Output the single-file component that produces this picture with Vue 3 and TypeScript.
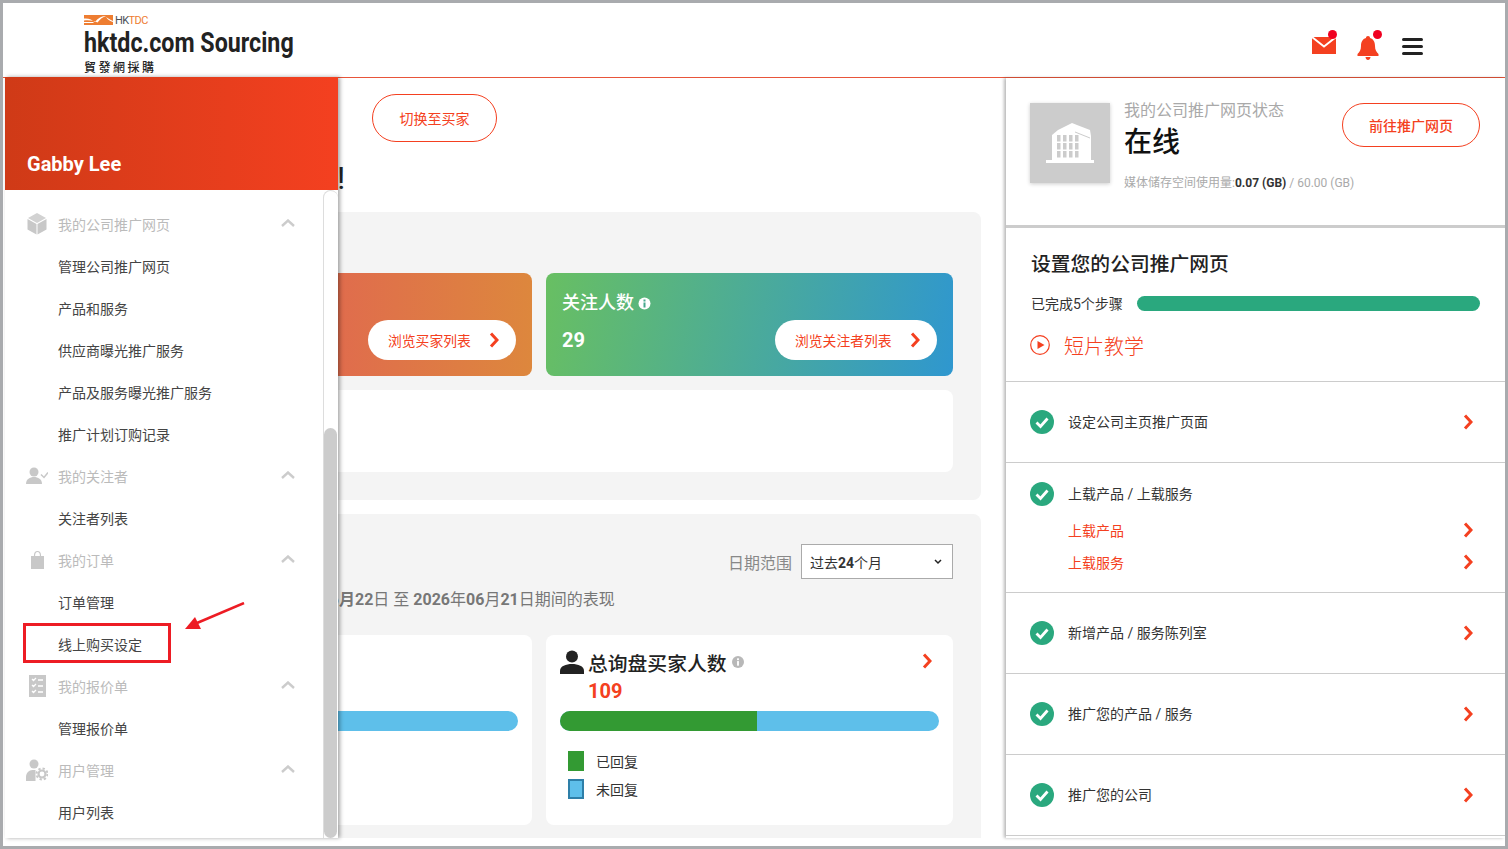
<template>
	<div class="frame">
		<header class="topbar">
			<div class="logo">
				<div class="logo-mark">
					<svg width="29" height="10" viewBox="0 0 29 10">
						<rect width="29" height="10" fill="#ee7d31" />
						<path d="M0 3.5C5 3 8 5 11 7C14 3 18 .5 22 1C19 2 16 4 13.5 7.5C10 5.5 5 5 0 5.5Z" fill="#fff" />
						<path d="M0 7h9l1 1H0zM22 2c2 1 4 3 7 4v1c-3-1-5-2-7-5z" fill="#fff" />
					</svg>
					<span class="logo-small"><span class="dark">HK</span>TDC</span>
				</div>
				<div class="logo-name">hktdc.com Sourcing</div>
				<div class="logo-cn">貿發網採購</div>
			</div>
			<div class="top-icons">
				<div class="top-icon">
					<svg width="24" height="18" viewBox="0 0 24 18">
						<path d="M0 1h24v17H0z" fill="#f44020" />
						<path d="M0 1l12 9.5L24 1" fill="none" stroke="#fff" stroke-width="1.8" />
					</svg>
					<i class="dot mail-dot" />
				</div>
				<div class="top-icon">
					<svg width="22" height="24" viewBox="0 0 22 24">
						<path d="M11 0c1.300 0 2 .8 2 2C16.500 3 18 6 18 10c0 4 1.500 6 3.500 8v2H.5v-2C2.500 16 4 14 4 10c0-4 1.500-7 5-8 0-1.200.7-2 2-2z" fill="#f44020" />
						<path d="M8.500 21h5c0 1.500-1 3-2.500 3s-2.500-1.500-2.500-3z" fill="#f44020" />
					</svg>
					<i class="dot bell-dot" />
				</div>
				<div class="burger"><i /><i /><i /></div>
			</div>
		</header>

		<div class="body">
			<main class="main">
				<button class="outline-btn switch-btn">切换至买家</button>
				<div class="bang">!</div>

				<section class="panel panel-one">
					<div class="stat-row">
						<div class="stat stat-orange">
							<div class="stat-bottom end">
								<button class="white-btn orange-btn">浏览买家列表<svg class="chev" width="10" height="16" viewBox="0 0 10 16"><path d="M2 1.500L8 8l-6 6.500" /></svg></button>
							</div>
						</div>
						<div class="stat stat-green">
							<div class="stat-title">关注人数 <svg width="13" height="13" viewBox="0 0 13 13"><circle cx="6.500" cy="6.500" r="6" fill="#fff" /><rect x="5.500" y="5.500" width="2" height="5" fill="#45a88c" /><rect x="5.500" y="2.500" width="2" height="2" fill="#45a88c" /></svg></div>
							<div class="stat-bottom">
								<span class="stat-num">29</span>
								<button class="white-btn green-btn">浏览关注者列表<svg class="chev" width="10" height="16" viewBox="0 0 10 16"><path d="M2 1.500L8 8l-6 6.500" /></svg></button>
							</div>
						</div>
					</div>
					<div class="blank-card" />
				</section>

				<section class="panel panel-two">
					<div class="date-row">
						<span class="date-label">日期范围</span>
						<div class="date-select">
							<span>过去<b>24</b>个月</span>
							<svg width="8" height="6" viewBox="0 0 8 6"><path d="M1 1l3 3 3-3" fill="none" stroke="#222" stroke-width="1.500" /></svg>
						</div>
					</div>
					<p class="period">2024年06<b>月22</b>日 至 <b>2026</b>年<b>06</b>月<b>21</b>日期间的表现</p>
					<div class="chart-row">
						<div v-for="card in chartCards" :key="card.id" class="chart-card">
							<div class="chart-head">
								<svg v-if="card.title" width="24" height="24" viewBox="0 0 24 24">
									<circle cx="12" cy="6.500" r="6" fill="#222" />
									<path d="M0 24v-3c0-5 6-7 12-7s12 2 12 7v3z" fill="#222" />
								</svg>
								<span class="chart-title">{{ card.title }}</span>
								<svg v-if="card.title" width="12" height="12" viewBox="0 0 13 13"><circle cx="6.500" cy="6.500" r="6.500" fill="#b8b8b8" /><rect x="5.500" y="5.500" width="2" height="5" fill="#fff" /><rect x="5.500" y="2.500" width="2" height="2" fill="#fff" /></svg>
								<svg class="chev chart-chev" width="10" height="16" viewBox="0 0 10 16"><path d="M2 1.500L8 8l-6 6.500" /></svg>
							</div>
							<div class="chart-num">{{ card.total }}</div>
							<div class="bar">
								<div class="bar-done" :style="{ width: card.done + '%' }" />
							</div>
							<div class="legend">
								<div class="legend-row"><i class="sw sw-green" />已回复</div>
								<div class="legend-row"><i class="sw sw-blue" />未回复</div>
							</div>
						</div>
					</div>
					<div class="chart-row next-row">
						<div class="chart-card" />
						<div class="chart-card" />
					</div>
				</section>
			</main>

			<aside class="side">
				<section class="status">
					<div class="tile">
						<svg width="48" height="42" viewBox="0 0 48 42">
							<path d="M0 38h48v3H0z" fill="#fff" />
							<path d="M6 38V13l6-5 14-7 5 2 13 5 1 6v24z" fill="#fff" />
							<path d="M29 10l15 6" stroke="#ccc" stroke-width="1" />
							<g fill="#ccc">
								<rect v-for="w in windows" :key="w.x + '-' + w.y" :x="w.x" :y="w.y" width="3.500" height="6.500" />
							</g>
						</svg>
					</div>
					<div class="status-text">
						<div class="status-label">我的公司推广网页状态</div>
						<div class="status-value">在线</div>
						<div class="status-usage">媒体储存空间使用量:<b>0.07 (GB)</b> / 60.00 (GB)</div>
					</div>
					<button class="outline-btn go-btn">前往推广网页</button>
				</section>

				<section class="setup">
					<h2>设置您的公司推广网页</h2>
					<div class="progress-row">
						<span>已完成5个步骤</span>
						<div class="progress" />
					</div>
					<div class="tutorial">
						<svg width="20" height="20" viewBox="0 0 20 20">
							<circle cx="10" cy="10" r="9.300" fill="none" stroke="#f44020" stroke-width="1.200" />
							<path d="M7.500 6l7 4-7 4z" fill="#f44020" />
						</svg>
						短片教学
					</div>
				</section>

				<div v-for="step in steps" :key="step.label" class="step" :class="{ 'step-open': step.subs }">
					<div class="step-head">
						<svg width="24" height="24" viewBox="0 0 24 24">
							<circle cx="12" cy="12" r="12" fill="#2aa87e" />
							<path d="M6.500 12.500l4 4 7-8" fill="none" stroke="#fff" stroke-width="2.800" />
						</svg>
						<span>{{ step.label }}</span>
						<svg v-if="!step.subs" class="chev step-chev" width="10" height="16" viewBox="0 0 10 16"><path d="M2 1.500L8 8l-6 6.500" /></svg>
					</div>
					<div v-for="sub in step.subs" :key="sub" class="step-sub">
						<span>{{ sub }}</span>
						<svg class="chev step-chev" width="10" height="16" viewBox="0 0 10 16"><path d="M2 1.500L8 8l-6 6.500" /></svg>
					</div>
				</div>
			</aside>
		</div>

		<nav class="drawer">
			<div class="drawer-head">Gabby Lee</div>
			<div class="drawer-list">
				<template v-for="group in menu" :key="group.label">
					<div class="menu-group">
						<span class="menu-icon">
							<svg v-if="group.icon === 'cube'" width="22" height="22" viewBox="0 0 22 22" fill="#c8c8c8">
								<path d="M11 0l9 5-9 5-9-5z" fill="#d2d2d2" />
								<path d="M1.500 6l9 5v10.500l-9-5zM20.500 6l-9 5v10.500l9-5z" />
							</svg>
							<svg v-else-if="group.icon === 'follower'" width="22" height="22" viewBox="0 0 22 22" fill="#c8c8c8">
								<circle cx="8" cy="7" r="4.500" />
								<path d="M0 19c0-5 4-7 8-7s8 2 8 7z" />
								<path d="M15 9.500l3 3 4-5" fill="none" stroke="#c8c8c8" stroke-width="1.500" />
							</svg>
							<svg v-else-if="group.icon === 'bag'" width="22" height="22" viewBox="0 0 22 22" fill="#c8c8c8">
								<path d="M5 7h13v13H5z" />
								<path d="M8.500 7c0-3 1-4.500 3-4.500s3 1.500 3 4.500" fill="none" stroke="#c8c8c8" stroke-width="1.200" />
							</svg>
							<svg v-else-if="group.icon === 'quote'" width="22" height="22" viewBox="0 0 22 22">
								<path d="M3 0h17v22H3z" fill="#c8c8c8" />
								<path d="M6 4l1.500 1.500L10 3M6 10l1.500 1.500L10 9M6 16l1.500 1.500L10 15M12 5h5M12 11h5M12 17h5" fill="none" stroke="#fff" stroke-width="1.300" />
							</svg>
							<svg v-else width="22" height="22" viewBox="0 0 22 22" fill="#c8c8c8">
								<circle cx="8" cy="5" r="4.500" />
								<path d="M0 22v-4c0-4 3-7 6.500-7h3v11z" />
								<circle cx="16" cy="15" r="6" fill="#fff" />
								<circle cx="16" cy="15" r="3.500" fill="none" stroke="#c8c8c8" stroke-width="2.200" />
								<circle cx="16" cy="15" r="5.500" fill="none" stroke="#c8c8c8" stroke-width="2" stroke-dasharray="2.300 2" />
							</svg>
						</span>
						<span>{{ group.label }}</span>
						<svg class="menu-caret" width="14" height="8" viewBox="0 0 14 8"><path d="M1 7l6-5.500L13 7" fill="none" stroke="#ccc" stroke-width="2.400" /></svg>
					</div>
					<div v-for="item in group.items" :key="item" class="menu-item">{{ item }}</div>
				</template>
			</div>
			<div class="track"><div class="thumb" /></div>
		</nav>

		<!-- annotation drawn over the screenshot -->
		<div class="mark-box" />
		<svg class="mark-arrow" width="60" height="30" viewBox="0 0 60 30">
			<path d="M59 1L12 21" stroke="#ed1c24" stroke-width="2.500" />
			<path d="M0 27L10 15l6 12z" fill="#ed1c24" />
		</svg>
	</div>
</template>

<script setup lang="ts">
const menu = [
	{ label: "我的公司推广网页", icon: "cube", items: ["管理公司推广网页", "产品和服务", "供应商曝光推广服务", "产品及服务曝光推广服务", "推广计划订购记录"] },
	{ label: "我的关注者", icon: "follower", items: ["关注者列表"] },
	{ label: "我的订单", icon: "bag", items: ["订单管理", "线上购买设定"] },
	{ label: "我的报价单", icon: "quote", items: ["管理报价单"] },
	{ label: "用户管理", icon: "users", items: ["用户列表"] },
];

const chartCards = [
	{ id: 1, title: "", total: "", done: 40 },
	{ id: 2, title: "总询盘买家人数", total: "109", done: 52 },
];

const steps: { label: string; subs?: string[] }[] = [
	{ label: "设定公司主页推广页面" },
	{ label: "上载产品 / 上载服务", subs: ["上载产品", "上载服务"] },
	{ label: "新增产品 / 服务陈列室" },
	{ label: "推广您的产品 / 服务" },
	{ label: "推广您的公司" },
];

// building windows on the status tile
const windows: { x: number; y: number }[] = [];
for (const x of [11, 17, 23, 29]) {
	for (const y of [13, 21, 29]) {
		windows.push({ x, y });
	}
}
</script>

<style>
html,
body {
	margin: 0;
	background: #fff;
}
</style>

<style scoped>
.frame {
	position: relative;
	box-sizing: border-box;
	width: 1508px;
	height: 849px;
	border: 3px solid #a9abae;
	background: #fff;
	overflow: hidden;
	font-family: Roboto, "Noto Sans CJK SC", sans-serif;
	font-size: 14px;
	color: #333;
}

.topbar {
	display: flex;
	justify-content: space-between;
	box-sizing: border-box;
	height: 75px;
	padding: 12px 82px 0 81px;
	border-bottom: 1px solid #e8553a;
}

.logo-mark {
	display: flex;
	align-items: center;
	gap: 2px;
	height: 10px;
}

.logo-small {
	font-size: 11px;
	letter-spacing: -0.6px;
	color: #ee7d31;
}

.logo-small .dark {
	color: #4a4f57;
}

.logo-name {
	margin-top: 2px;
	font-size: 28px;
	line-height: 32px;
	font-weight: 700;
	color: #222;
	white-space: nowrap;
	transform: scaleX(0.83);
	transform-origin: left;
}

.logo-cn {
	font-size: 12px;
	line-height: 15px;
	font-weight: 500;
	letter-spacing: 2.500px;
	color: #222;
	font-family: "Noto Sans CJK TC", sans-serif;
}

.top-icons {
	display: flex;
	align-items: flex-start;
	padding-top: 21px;
}

.top-icon {
	position: relative;
	width: 24px;
	margin-right: 21px;
}

.dot {
	position: absolute;
	width: 9px;
	height: 9px;
	border-radius: 50%;
	background: #f00020;
}

.mail-dot {
	top: -6px;
	left: 16px;
}

.bell-dot {
	top: -6px;
	left: 16px;
}

.burger {
	display: flex;
	flex-direction: column;
	gap: 4px;
	width: 21px;
	padding-top: 2px;
}

.burger i {
	height: 3px;
	border-radius: 2px;
	background: #222;
}

.body {
	display: flex;
	height: 760px;
}

.main {
	box-sizing: border-box;
	width: 1003px;
	flex: none;
	padding: 16px 25px 0 94px;
	overflow: hidden;
}

.outline-btn {
	display: block;
	padding: 0;
	border: 1px solid #f44020;
	background: #fff;
	color: #f44020;
	font-family: inherit;
	font-size: 14px;
}

.switch-btn {
	width: 125px;
	height: 48px;
	margin-left: 275px;
	border-radius: 24px;
}

.bang {
	margin: 16px 0 14px 240px;
	font-size: 32px;
	line-height: 40px;
	color: #222;
}

.panel {
	border-radius: 8px;
	background: #f4f4f4;
	padding: 0 28px;
}

.panel-one {
	padding-top: 61px;
	padding-bottom: 28px;
	margin-bottom: 14px;
}

.stat-row,
.chart-row {
	display: grid;
	grid-template-columns: 407px 407px;
	gap: 14px;
}

.stat {
	display: flex;
	flex-direction: column;
	justify-content: flex-end;
	box-sizing: border-box;
	height: 103px;
	padding: 0 16px 16px;
	border-radius: 8px;
	color: #fff;
}

.stat-orange {
	background: linear-gradient(90deg, #e34f5e, #dd873d);
}

.stat-green {
	background: linear-gradient(100deg, #68bf62, #2f97cf);
}

.stat-title {
	display: flex;
	align-items: center;
	gap: 4px;
	margin-bottom: 3px;
	font-size: 18px;
	line-height: 28px;
	font-weight: 500;
}

.stat-bottom {
	display: flex;
	align-items: center;
	justify-content: space-between;
}

.stat-bottom.end {
	justify-content: flex-end;
}

.stat-num {
	font-size: 20px;
	font-weight: 700;
}

.white-btn {
	display: flex;
	align-items: center;
	justify-content: space-between;
	box-sizing: border-box;
	height: 40px;
	padding: 0 17px 0 20px;
	border: none;
	border-radius: 20px;
	background: #fff;
	color: #f44020;
	font-family: inherit;
	font-size: 13.800px;
}

.orange-btn {
	width: 148px;
}

.green-btn {
	width: 162px;
}

.chev path {
	fill: none;
	stroke: #f44020;
	stroke-width: 3;
}

.blank-card {
	height: 82px;
	margin-top: 14px;
	border-radius: 8px;
	background: #fff;
}

.panel-two {
	padding-top: 30px;
	padding-bottom: 40px;
}

.date-row {
	display: flex;
	align-items: center;
	justify-content: flex-end;
	gap: 9px;
}

.date-label {
	font-size: 16px;
	color: #888;
}

.date-select {
	display: flex;
	align-items: center;
	justify-content: space-between;
	box-sizing: border-box;
	width: 152px;
	height: 35px;
	padding: 0 10px 0 8px;
	border: 1px solid #aaa;
	background: #fff;
	color: #333;
}

.period {
	margin: 9px 0 0 144px;
	font-size: 16px;
	line-height: 24px;
	color: #777;
	white-space: nowrap;
}

.period b {
	font-weight: 700;
}

.chart-row {
	margin-top: 23px;
}

.chart-card {
	box-sizing: border-box;
	height: 190px;
	padding: 15px 14px 0;
	border-radius: 8px;
	background: #fff;
}

.chart-head {
	display: flex;
	align-items: center;
	height: 24px;
	gap: 4px;
}

.chart-title {
	font-size: 19.800px;
	font-weight: 500;
	color: #222;
}

.chart-head .chart-title + svg {
	margin-left: 2px;
}

.chart-chev {
	margin: -2px 7px 0 auto;
}

.chart-num {
	height: 24px;
	margin-top: 5px;
	padding-left: 28px;
	font-size: 20px;
	line-height: 24px;
	font-weight: 700;
	color: #f44020;
}

.bar {
	height: 20px;
	margin-top: 8px;
	border-radius: 10px;
	background: #5ebfea;
	overflow: hidden;
}

.bar-done {
	height: 100%;
	background: #339a33;
}

.legend {
	margin-top: 20px;
	padding-left: 8px;
}

.legend-row {
	display: flex;
	align-items: center;
	gap: 12px;
	height: 20px;
	margin-bottom: 8px;
	color: #333;
}

.sw {
	box-sizing: border-box;
	width: 16px;
	height: 20px;
}

.sw-green {
	background: #339a33;
}

.sw-blue {
	border: 2px solid #2e7fa8;
	background: #5ebfea;
}

.next-row {
	margin-top: 14px;
}

.side {
	position: relative;
	flex: 1;
	min-width: 0;
	background: #fff;
	box-shadow: -2px 0 3px rgba(0, 0, 0, 0.28);
	overflow: hidden;
}

.status {
	display: flex;
	align-items: flex-start;
	gap: 14px;
	box-sizing: border-box;
	height: 150px;
	padding: 25px 25px 0 24px;
	border-bottom: 3px solid #ccc;
}

.tile {
	display: flex;
	align-items: center;
	justify-content: center;
	width: 80px;
	height: 80px;
	flex: none;
	background: #ccc;
	box-shadow: 0 1px 4px rgba(0, 0, 0, 0.2);
}

.status-text {
	flex: 1;
	min-width: 0;
	white-space: nowrap;
}

.status-label {
	font-size: 16px;
	line-height: 16px;
	color: #a9a9a9;
}

.status-value {
	margin-top: 6px;
	font-size: 28px;
	line-height: 36px;
	font-weight: 500;
	color: #111;
}

.status-usage {
	margin-top: 14px;
	font-size: 12px;
	line-height: 16px;
	color: #aaa;
}

.status-usage b {
	color: #333;
}

.go-btn {
	width: 138px;
	height: 44px;
	flex: none;
	border-radius: 22px;
	font-weight: 500;
}

.setup {
	box-sizing: border-box;
	height: 154px;
	padding: 23px 25px 0;
	border-bottom: 1px solid #ccc;
}

.setup h2 {
	margin: 0;
	font-size: 19.800px;
	line-height: 28px;
	font-weight: 500;
	color: #222;
}

.progress-row {
	display: flex;
	align-items: center;
	gap: 14px;
	height: 16px;
	margin-top: 16px;
	color: #333;
	white-space: nowrap;
}

.progress {
	flex: 1;
	height: 15px;
	border-radius: 8px;
	background: #2aa87e;
}

.tutorial {
	display: flex;
	align-items: center;
	gap: 14px;
	height: 28px;
	margin: 20px 0 0 -1px;
	font-size: 20px;
	font-weight: 300;
	color: #f44020;
}

.step {
	box-sizing: border-box;
	height: 81px;
	padding: 0 32px 0 24px;
	border-bottom: 1px solid #ccc;
	display: flex;
	flex-direction: column;
	justify-content: center;
}

.step-open {
	height: 130px;
	justify-content: flex-start;
	padding-top: 19px;
}

.step-head {
	display: flex;
	align-items: center;
	gap: 14px;
	color: #333;
}

.step-chev {
	margin-left: auto;
}

.step-head span {
	margin-top: -2px;
}

.step-sub {
	display: flex;
	align-items: center;
	height: 32px;
	padding-left: 38px;
	color: #f44020;
}

.step-head + .step-sub {
	margin-top: 8px;
}

.drawer {
	position: absolute;
	top: 74px;
	left: 2px;
	display: flex;
	flex-direction: column;
	width: 333px;
	height: 761px;
	background: #fff;
	box-shadow: 2px 0 4px rgba(0, 0, 0, 0.35);
}

.drawer-head {
	box-sizing: border-box;
	height: 113px;
	padding: 72px 0 0 22px;
	background: linear-gradient(90deg, #cf3a17, #f44020);
	color: #fff;
	font-size: 20px;
	line-height: 30px;
	font-weight: 700;
}

.drawer-list {
	padding-top: 13px;
	overflow: hidden;
}

.menu-group,
.menu-item {
	display: flex;
	align-items: center;
	height: 42px;
	padding-left: 21px;
	padding-right: 43px;
}

.menu-group {
	color: #bbb;
}

.menu-icon {
	display: flex;
	width: 32px;
	flex: none;
}

.menu-caret {
	margin-left: auto;
	margin-top: -3px;
}

.menu-item {
	padding-left: 53px;
	color: #444;
}

.track {
	position: absolute;
	top: 113px;
	right: 0;
	bottom: 0;
	box-sizing: border-box;
	width: 15px;
	border: 1px solid #ddd;
	border-bottom: none;
	border-right: none;
	border-radius: 8px 8px 0 0;
	background: #fff;
}

.thumb {
	position: absolute;
	left: 0;
	right: 1px;
	bottom: 0;
	height: 410px;
	border-radius: 7px;
	background: #ccc;
}

.mark-box {
	position: absolute;
	top: 620px;
	left: 20px;
	box-sizing: border-box;
	width: 148px;
	height: 40px;
	border: 3px solid #ed1c24;
}

.mark-arrow {
	position: absolute;
	top: 599px;
	left: 182px;
}
</style>
